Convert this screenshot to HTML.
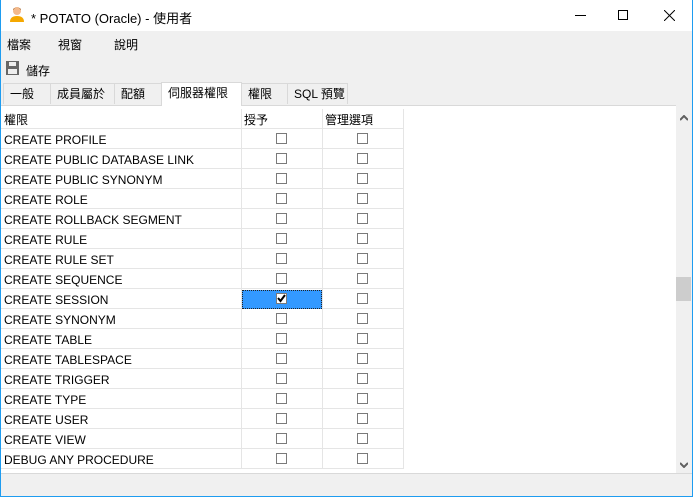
<!DOCTYPE html>
<html><head><meta charset="utf-8"><style>
*{margin:0;padding:0;box-sizing:border-box}
body{width:693px;height:497px;overflow:hidden;background:#f0f0f0;font-family:"Segoe UI","Liberation Sans","Noto Sans CJK TC",sans-serif;font-size:12px;color:#000;position:relative}
.abs{position:absolute}
.frame{position:absolute;left:0;top:0;width:693px;height:497px;border:1px solid #1e9cf0;border-top:none;pointer-events:none}
.title{left:0;top:0;width:693px;height:31px;background:#fff}
.tab{position:absolute;top:83px;height:21px;border:1px solid #d9d9d9;border-bottom:none;background:#f0f0f0;font-size:12px;line-height:21px;padding-left:6px}
.row{position:absolute;left:1px;width:403px;height:20px;border-bottom:1px solid #e5e5e5;background:#fff}
.row span{position:absolute;left:3px;top:4px;font-size:12px;line-height:15px}
.cb{position:absolute;width:11px;height:11px;border:1px solid #7a7a7a;background:#fff}
.vl{position:absolute;top:109px;width:1px;height:360px;background:#e5e5e5}
</style></head><body>
<div class="abs title"></div>
<svg class="abs" style="left:9px;top:6px" width="16" height="17" viewBox="0 0 16 17"><circle cx="8" cy="5" r="4" fill="#f3b98b"/><path d="M4 4 Q8 -1 12 4 L12 3 Q8 0 4 3Z" fill="#8a5a2b"/><path d="M1 16 Q1 10 8 10 Q15 10 15 16Z" fill="#f5a800"/></svg>
<div class="abs" style="left:31px;top:8px;font-size:13px">* POTATO (Oracle) - 使用者</div>
<div class="abs" style="left:575px;top:15px;width:11px;height:1px;background:#000"></div>
<div class="abs" style="left:618px;top:10px;width:10px;height:10px;border:1px solid #000"></div>
<svg class="abs" style="left:664px;top:10px" width="11" height="11"><path d="M0 0L11 11M11 0L0 11" stroke="#000" stroke-width="1"/></svg>
<div class="abs" style="left:7px;top:36px">檔案</div>
<div class="abs" style="left:58px;top:36px">視窗</div>
<div class="abs" style="left:114px;top:36px">說明</div>
<svg class="abs" style="left:6px;top:61px" width="13" height="14"><rect x="0" y="0" width="13" height="14" fill="#666"/><rect x="3" y="1" width="7" height="4" fill="#eee"/><rect x="2" y="8" width="9" height="5" fill="#eee"/></svg>
<div class="abs" style="left:26px;top:62px">儲存</div>
<div class="tab" style="left:3px;width:48px">一般</div>
<div class="tab" style="left:50px;width:65px">成員屬於</div>
<div class="tab" style="left:114px;width:48px">配額</div>
<div class="tab" style="left:287px;width:61px">SQL 預覽</div>
<div class="tab" style="left:241px;width:47px">權限</div>
<div class="tab" style="left:161px;top:82px;height:24px;width:81px;background:#fff;z-index:2">伺服器權限</div>
<div class="abs" style="left:1px;top:105px;width:675px;height:369px;background:#fff;border-top:1px solid #d9d9d9"></div>
<div class="row" style="top:109px"><span>權限</span><span style="left:243px">授予</span><span style="left:324px">管理選項</span></div>
<div id="rows"></div>
<div class="vl" style="left:241px"></div><div class="vl" style="left:322px"></div><div class="vl" style="left:403px"></div>
<div class="abs" style="left:676px;top:110px;width:16px;height:364px;background:#f0f0f0"></div>
<div class="abs" style="left:676px;top:277px;width:15px;height:24px;background:#cdcdcd"></div>
<svg class="abs" style="left:680px;top:115px" width="8" height="6"><path d="M0 5L4 1L8 5" stroke="#606060" stroke-width="2" fill="none"/></svg>
<svg class="abs" style="left:680px;top:462px" width="8" height="6"><path d="M0 1L4 5L8 1" stroke="#606060" stroke-width="2" fill="none"/></svg>
<div class="abs" style="left:1px;top:473px;width:691px;height:1px;background:#d9d9d9"></div>
<script>
var n=["CREATE PROFILE","CREATE PUBLIC DATABASE LINK","CREATE PUBLIC SYNONYM","CREATE ROLE","CREATE ROLLBACK SEGMENT","CREATE RULE","CREATE RULE SET","CREATE SEQUENCE","CREATE SESSION","CREATE SYNONYM","CREATE TABLE","CREATE TABLESPACE","CREATE TRIGGER","CREATE TYPE","CREATE USER","CREATE VIEW","DEBUG ANY PROCEDURE"];
var h="";
n.forEach(function(t,i){var y=129+i*20;
h+='<div class="row" style="top:'+y+'px"><span>'+t+'</span></div>';
if(i==8){h+='<div class="abs" style="left:242px;top:'+(y+1)+'px;width:80px;height:19px;background:#3399ff;border:1px dotted #222"></div>';
h+='<div class="cb" style="left:276px;top:'+(y+4)+'px"><svg width="9" height="9" style="position:absolute;left:0;top:0"><path d="M1 4L3.5 7L8 1" stroke="#000" stroke-width="2" fill="none"/></svg></div>';}
else h+='<div class="cb" style="left:276px;top:'+(y+4)+'px"></div>';
h+='<div class="cb" style="left:357px;top:'+(y+4)+'px"></div>';});
document.getElementById("rows").innerHTML=h;
</script>
<div class="frame"></div>
</body></html>
